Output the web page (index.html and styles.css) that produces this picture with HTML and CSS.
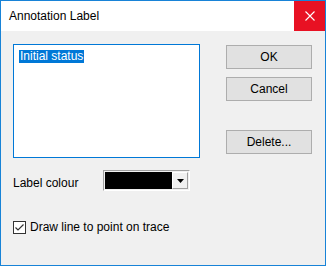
FILE: index.html
```html
<!DOCTYPE html>
<html lang="en">
<head>
    <meta charset="UTF-8">
    <title>Annotation Label</title>
    <link rel="stylesheet" href="styles.css">
</head>
<body>
    <div class="window">
        <!-- Title bar -->
        <div class="titlebar">
            <span class="title">Annotation Label</span>
            <button class="close-btn">
                <svg width="10" height="10" viewBox="0 0 10 10">
                    <path d="M0.5 0.5 L9.5 9.5 M9.5 0.5 L0.5 9.5" stroke="#ffffff" stroke-width="1.1" fill="none"/>
                </svg>
            </button>
        </div>

        <!-- Dialog body -->
        <div class="dialog-body">
            <div class="top-row">
                <div class="listbox">
                    <span class="list-item selected">Initial status</span>
                </div>
                <div class="actions">
                    <button class="btn">OK</button>
                    <button class="btn">Cancel</button>
                    <button class="btn delete-btn">Delete...</button>
                </div>
            </div>

            <div class="colour-row">
                <span class="field-label">Label colour</span>
                <div class="combo">
                    <div class="swatch"></div>
                    <div class="combo-drop">
                        <svg width="7" height="4" viewBox="0 0 7 4">
                            <path d="M0 0 H7 L3.5 4 Z" fill="#000000"/>
                        </svg>
                    </div>
                </div>
            </div>

            <label class="check-row">
                <span class="checkbox">
                    <svg width="11" height="11" viewBox="0 0 11 11">
                        <path d="M1.5 5.5 L4 8 L9.5 2.5" stroke="#333333" stroke-width="1.2" fill="none"/>
                    </svg>
                </span>
                <span>Draw line to point on trace</span>
            </label>
        </div>
    </div>
</body>
</html>
```

FILE: styles.css
```css
body {
    margin: 0;
    padding: 0;
    font-family: "Liberation Sans", Arial, sans-serif;
    font-size: 12px;
    color: #000000;
}
.window {
    width: 326px;
    height: 266px;
    box-sizing: border-box;
    border: 1px solid #1883d7;
    background-color: #f0f0f0;
    display: flex;
    flex-direction: column;
}
.titlebar {
    height: 30px;
    background-color: #ffffff;
    display: flex;
    align-items: center;
    justify-content: space-between;
}
.title {
    padding-left: 8px;
    font-size: 12px;
    color: #000000;
}
.close-btn {
    width: 31px;
    height: 30px;
    border: none;
    padding: 0;
    background-color: #e81123;
    display: flex;
    align-items: center;
    justify-content: center;
}
.dialog-body {
    padding: 13px 13px 0 12px;
}
.top-row {
    display: flex;
    gap: 26px;
}
.listbox {
    width: 187px;
    height: 114px;
    box-sizing: border-box;
    border: 1px solid #0078d7;
    background-color: #ffffff;
    padding: 4px 5px;
}
.list-item {
    display: inline-block;
    line-height: 13px;
    padding: 0 1px;
}
.list-item.selected {
    background-color: #0078d7;
    color: #ffffff;
}
.actions {
    display: flex;
    flex-direction: column;
    gap: 8px;
    padding-top: 1px;
}
.btn {
    width: 86px;
    height: 24px;
    box-sizing: border-box;
    border: 1px solid #adadad;
    background-color: #e1e1e1;
    font-family: inherit;
    font-size: 12px;
    color: #000000;
    padding: 0;
}
.delete-btn {
    margin-top: 21px;
}
.colour-row {
    display: flex;
    align-items: center;
    margin-top: 12px;
}
.field-label {
    width: 90px;
    padding-top: 5px;
}
.combo {
    width: 87px;
    height: 21px;
    box-sizing: border-box;
    border: 1px solid;
    border-color: #a0a0a0 #ffffff #ffffff #a0a0a0;
    display: flex;
    padding: 1px;
    background-color: #f0f0f0;
}
.swatch {
    flex: 1;
    background-color: #000000;
}
.combo-drop {
    width: 16px;
    box-sizing: border-box;
    border: 1px solid;
    border-color: #ffffff #a0a0a0 #a0a0a0 #ffffff;
    background-color: #f0f0f0;
    display: flex;
    align-items: center;
    justify-content: center;
}
.check-row {
    display: flex;
    align-items: center;
    gap: 4px;
    margin-top: 29px;
}
.checkbox {
    width: 13px;
    height: 13px;
    box-sizing: border-box;
    border: 1px solid #333333;
    background-color: #ffffff;
    display: flex;
    align-items: center;
    justify-content: center;
}
```
